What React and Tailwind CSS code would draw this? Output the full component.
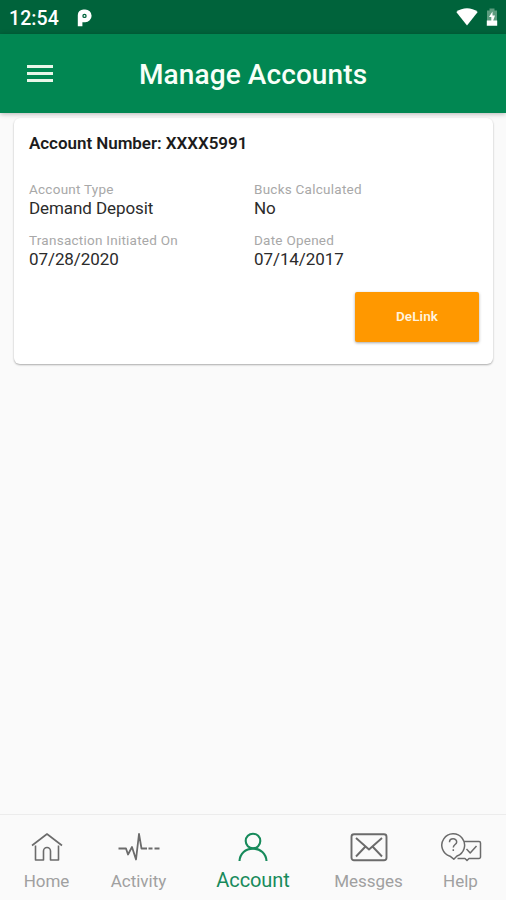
import React from 'react';

function StatusBar() {
  return (
    <div className="flex h-[34px] shrink-0 items-center bg-[#00633b] pl-[9px] pr-[7px] text-white">
      <span className="w-[50px] pt-[3px] text-[19.5px] font-medium leading-[34px] tracking-[0.1px] whitespace-nowrap">12:54</span>
      <svg className="ml-[18px] mt-[2px]" width="16" height="18" viewBox="0 0 16 18">
        <path fillRule="evenodd" fill="#fff" d="M.8 17.300V6A5.600 5.600 0 0 1 6.400.4h1.800a6.400 6.400 0 0 1 0 12.800H5.400v4.100zM7.500 4.700a2.200 2.200 0 1 0 0 4.400 2.200 2.200 0 0 0 0-4.400z" />
        <circle cx="7.500" cy="6.900" r="0.900" fill="#fff" />
      </svg>
      <svg className="ml-auto mt-[-1px]" width="22" height="18" viewBox="0 0 22 18">
        <path fill="#fff" d="M.3 4.100C6.500-.9 15.500-.9 21.700 4.100L11 17.500z" />
      </svg>
      <svg className="ml-[8px] mr-px" width="12" height="20" viewBox="0 0 12 20">
        <path fill="#5d9c7f" d="M1 3.500h2.500V1.500h5v2H11V14H1z" />
        <path fill="#fff" d="M.8 13.500h10.400v5.200H.8zM6.500 4.500 3 10h2.300v3.500h1.900L9 8.500H6.500z" />
      </svg>
    </div>
  );
}

function Header() {
  return (
    <header className="relative z-10 flex h-[79px] shrink-0 items-center bg-[#018752] pl-[27px] shadow-[0_1px_5px_rgba(0,0,0,0.28)]">
      <div className="flex w-[26px] flex-col gap-[4px]">
        <i className="h-[3px] bg-[#e9f6e9]" />
        <i className="h-[3px] bg-[#e9f6e9]" />
        <i className="h-[3px] bg-[#e9f6e9]" />
      </div>
      <h1 className="ml-[86px] pt-[3px] text-[28px] font-medium leading-[32px] tracking-[0.1px] whitespace-nowrap text-[#f8fff8]">Manage Accounts</h1>
    </header>
  );
}

function Field({ label, value }) {
  return (
    <div className="h-[51px] whitespace-nowrap">
      <div className="text-[13.500px] leading-[18px] tracking-[0.25px] text-[#a8a8a8]">{label}</div>
      <div className="text-[17px] leading-[20px] tracking-[-0.08px] text-[#2b2b2b]">{value}</div>
    </div>
  );
}

const strokeProps = { fill: 'none', stroke: 'currentColor', strokeLinejoin: 'round' };

function HomeIcon() {
  return (
    <svg width="32" height="30" viewBox="0 0 32 30" strokeWidth="1.600" {...strokeProps}>
      <path d="M1 13.500 16 2l15 11.500M4.500 13.500V28h8v-9a3.500 3.500 0 0 1 7 0v9h8V13.500" />
    </svg>
  );
}

function ActivityIcon() {
  return (
    <svg width="42" height="30" viewBox="0 0 42 30" strokeWidth="1.800" {...strokeProps}>
      <path d="M.5 16.500H8l2 6 4-7.500 4 12.500L21 2l2.500 14.500H29M30.500 16.500h4M36.500 16.500h5" />
    </svg>
  );
}

function AccountIcon() {
  return (
    <svg width="30" height="30" viewBox="0 0 30 30" strokeWidth="2.100" {...strokeProps}>
      <circle cx="15" cy="9" r="7.300" />
      <path d="M1.500 29C2 21.500 7.500 16.600 15 16.600S28 21.500 28.500 29" />
    </svg>
  );
}

function MessageIcon() {
  return (
    <svg width="38" height="30" viewBox="0 0 38 30" strokeWidth="1.900" {...strokeProps}>
      <rect x="1.500" y="2.200" width="35" height="26" rx="2.500" />
      <path d="m6 6 13 11.500L32 6M6 24.500l9.500-10M32 24.500l-9.500-10" />
    </svg>
  );
}

function HelpIcon() {
  return (
    <svg width="42" height="30" viewBox="0 0 42 30" strokeWidth="1.500" {...strokeProps}>
      <path d="M10 24.200A11.400 11.400 0 1 1 17 24l-3.200 3.200zM23.500 9.500H39a1.500 1.500 0 0 1 1.500 1.500v14a1.500 1.500 0 0 1-1.500 1.500H29l-2 2-2-2h-7.500" />
      <path d="M9.500 10.200c0-4.600 7.200-4.400 7.200-.3 0 2.700-3.400 2.600-3.400 5.600M13.300 17.300v1.800M26.500 17l3.700 4 6.300-7" />
    </svg>
  );
}

function Tab({ icon, label, active, className }) {
  return (
    <div className={`flex flex-col items-center whitespace-nowrap ${active ? 'text-[#178a5b]' : 'text-[#6b6b6b]'} ${className}`}>
      {icon}
      {active ? (
        <span className="mt-[6px] text-[20px] leading-[24px] tracking-[-0.1px]">{label}</span>
      ) : (
        <span className="mt-[8px] text-[17px] leading-[22px] tracking-[0px] text-[#a0a0a0]">{label}</span>
      )}
    </div>
  );
}

export default function App() {
  return (
    <div className="flex h-[900px] w-[506px] flex-col overflow-hidden bg-[#fafafa] font-['Roboto',sans-serif]">
      <StatusBar />
      <Header />
      <main className="flex-1 px-[14px] pt-[5px]">
        <section className="flex h-[246px] w-[479px] flex-col rounded-[6px] bg-white pl-[15px] pr-[14px] pt-[14px] shadow-[0_1px_2px_rgba(0,0,0,0.32)]">
          <h2 className="text-[17px] font-semibold leading-[22px] tracking-[-0.05px] whitespace-nowrap text-[#1c1c1c]">Account Number: XXXX5991</h2>
          <div className="mt-[26px] grid grid-cols-[225px_1fr]">
            <Field label="Account Type" value="Demand Deposit" />
            <Field label="Bucks Calculated" value="No" />
            <Field label="Transaction Initiated On" value="07/28/2020" />
            <Field label="Date Opened" value="07/14/2017" />
          </div>
          <button className="mt-[10px] h-[50px] w-[124px] shrink-0 self-end rounded-[2px] bg-[#ff9800] pb-[2px] text-[13.500px] font-semibold tracking-[0.1px] text-[#fff3df] shadow-[0_1px_3px_rgba(0,0,0,0.35)]">DeLink</button>
        </section>
      </main>
      <nav className="flex h-[86px] shrink-0 border-t border-[#ececec] pt-[17px]">
        <Tab className="w-[93px]" icon={<HomeIcon />} label="Home" />
        <Tab className="w-[91px]" icon={<ActivityIcon />} label="Activity" />
        <Tab className="w-[138px]" icon={<AccountIcon />} label="Account" active />
        <Tab className="w-[93px]" icon={<MessageIcon />} label="Messges" />
        <Tab className="w-[91px]" icon={<HelpIcon />} label="Help" />
      </nav>
    </div>
  );
}
